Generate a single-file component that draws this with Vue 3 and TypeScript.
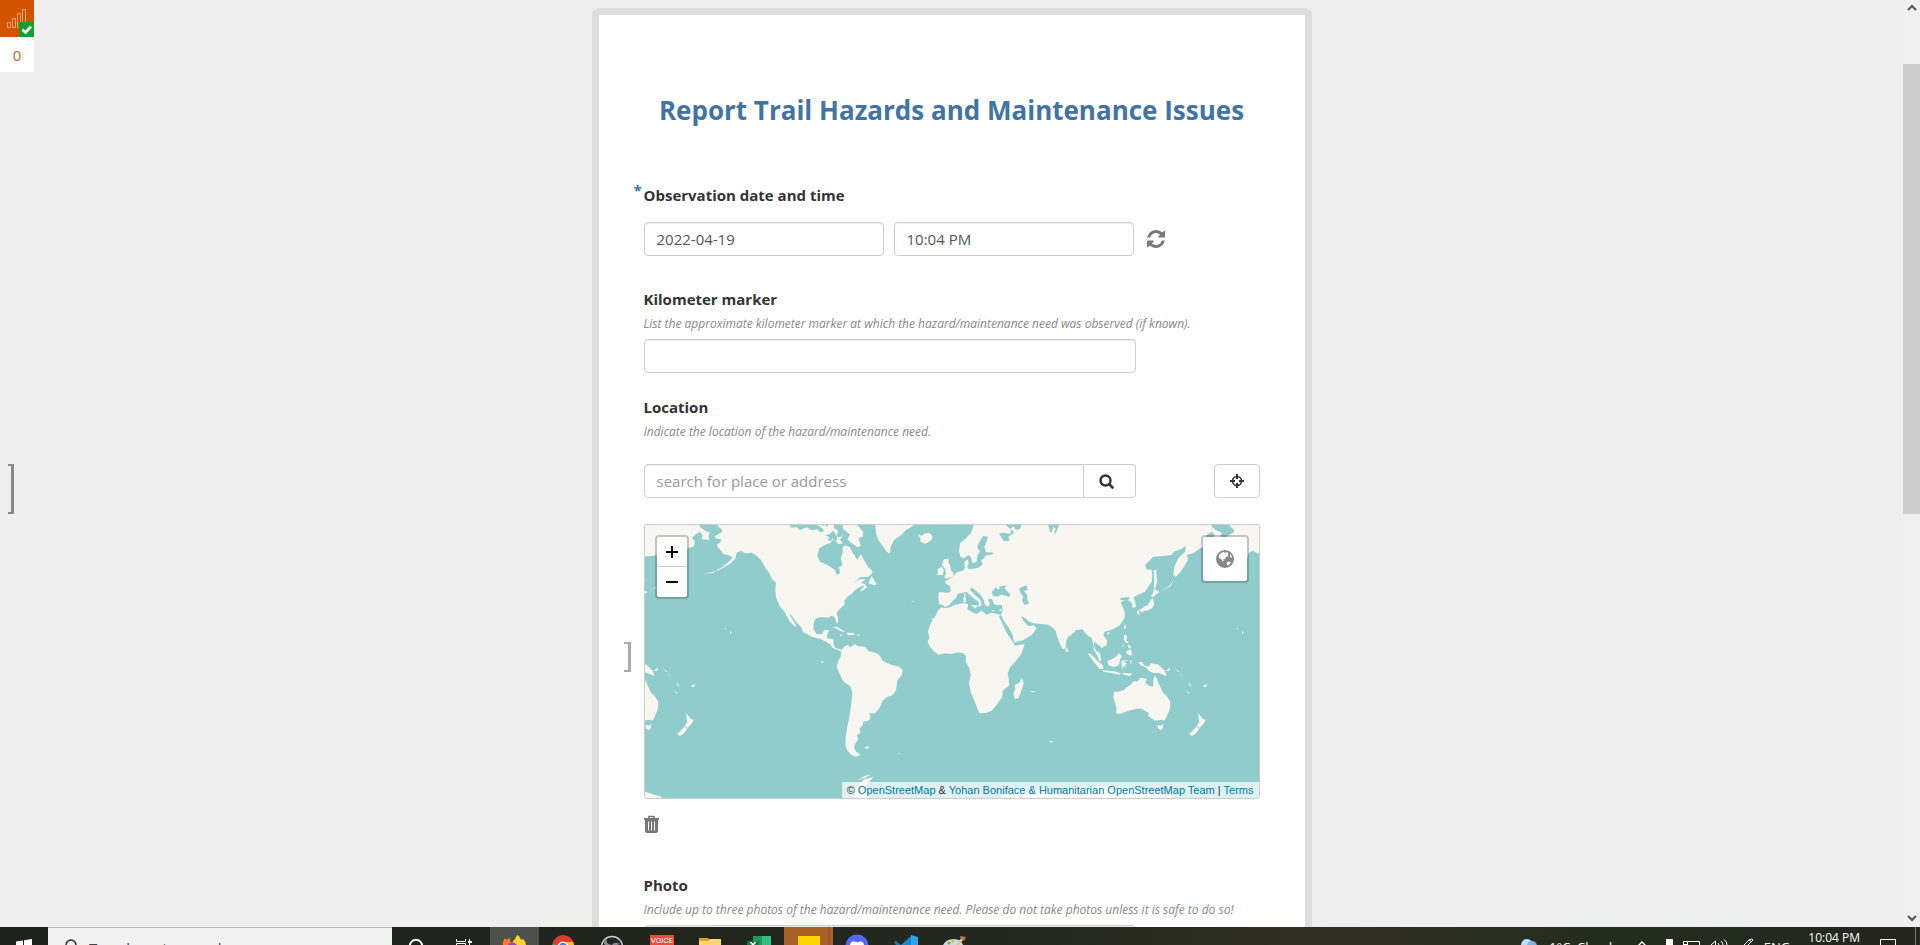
<script setup lang="ts">
import { ref } from 'vue'

const date = ref('2022-04-19')
const time = ref('10:04 PM')
const kilometer = ref('')
const place = ref('')
const copies = [-1536, 0, 1536]

const continents = [
  // North and South America
  'M288,35 L296,52 L305,58 L306,66 L296,72 L283,80 L290,86 L303,88 L302,96 L291,104 L293,112 L304,122 L310,132 L325,136 L338,142 L328,154 L308,170 L290,180 L292,183 L315,170 L332,160 L346,146 L350,128 L363,122 L375,130 L395,128 L412,138 L424,152 L435,170 L448,190 L456,206 L468,218 L466,240 L468,262 L480,290 L492,303 L500,318 L510,335 L525,350 L529,348 L520,332 L507,312 L513,314 L528,335 L545,353 L549,366 L575,380 L600,386 L618,395 L630,402 L638,414 L655,420 L664,426 L662,440 L655,452 L650,470 L658,490 L670,514 L692,530 L697,550 L693,590 L688,620 L682,650 L677,680 L676,705 L682,722 L695,735 L708,740 L722,735 L708,725 L702,712 L706,700 L714,690 L711,675 L722,668 L718,655 L728,647 L730,635 L745,632 L752,622 L748,610 L766,610 L780,592 L788,572 L800,562 L818,555 L828,540 L832,512 L845,495 L848,480 L838,470 L815,465 L800,458 L788,452 L778,434 L762,427 L745,424 L735,410 L715,409 L705,403 L690,412 L684,404 L672,410 L665,420 L655,416 L645,413 L640,400 L640,388 L622,385 L620,378 L628,360 L612,360 L606,372 L590,373 L580,357 L582,335 L588,325 L605,321 L625,323 L634,317 L643,320 L650,338 L654,339 L654,322 L650,308 L660,296 L675,282 L672,272 L685,258 L695,252 L705,240 L720,231 L735,226 L720,244 L728,242 L742,232 L734,222 L722,219 L738,208 L718,208 L700,220 L720,202 L745,200 L757,190 L757,182 L745,172 L735,155 L722,132 L712,150 L700,132 L690,112 L675,106 L668,112 L668,130 L662,145 L668,165 L657,172 L660,190 L650,195 L645,180 L622,165 L600,155 L592,138 L598,115 L614,105 L632,98 L640,88 L630,70 L640,62 L650,78 L652,92 L664,85 L670,70 L655,58 L658,35 Z',
  'M665,35 L690,35 L715,48 L730,66 L728,80 L716,84 L722,108 L712,112 L690,95 L682,88 L690,74 L670,58 Z',
  'M645,92 L660,88 L668,100 L655,102 Z',
  // Greenland and Iceland
  'M765,35 L768,70 L775,90 L788,108 L800,125 L810,131 L812,112 L822,90 L845,74 L858,60 L880,47 L885,35 Z',
  'M893,73 L905,77 L915,70 L930,70 L938,80 L932,92 L915,101 L900,94 L902,86 Z',
  'M745,220 L755,198 L762,210 L770,222 L764,226 Z',
  // Caribbean
  'M635,353 L650,350 L668,361 L678,366 L662,364 L648,355 Z',
  'M680,368 L698,368 L705,375 L684,376 Z',
  'M660,373 L668,375 L662,377 Z',
  'M711,373 L719,374 L718,377 L711,376 Z',
  'M734,711 L748,709 L746,715 L738,716 Z',
  // Europe and Asia
  'M1065,35 L1053,68 L1035,88 L1020,100 L1017,125 L1022,140 L1032,145 L1045,135 L1052,140 L1058,160 L1070,155 L1072,135 L1080,125 L1072,112 L1078,95 L1090,78 L1103,80 L1100,95 L1093,110 L1098,127 L1122,128 L1118,133 L1095,137 L1093,145 L1082,150 L1088,162 L1078,172 L1060,176 L1046,178 L1042,170 L1046,160 L1044,148 L1032,156 L1035,175 L1027,183 L1012,186 L1000,198 L988,208 L974,214 L978,222 L990,228 L992,245 L985,248 L957,246 L955,262 L957,282 L968,284 L975,292 L988,285 L998,272 L1010,262 L1012,252 L1028,248 L1040,245 L1050,255 L1065,268 L1078,278 L1073,292 L1085,286 L1082,270 L1065,255 L1050,240 L1054,232 L1066,241 L1082,255 L1090,268 L1095,285 L1105,290 L1110,280 L1103,268 L1115,266 L1122,282 L1130,286 L1146,285 L1148,300 L1143,314 L1150,330 L1165,352 L1178,375 L1182,398 L1210,390 L1235,375 L1250,355 L1240,345 L1228,349 L1220,343 L1210,332 L1203,318 L1215,325 L1228,335 L1240,340 L1285,344 L1300,355 L1307,362 L1311,378 L1318,398 L1328,418 L1336,415 L1340,386 L1355,373 L1370,360 L1388,358 L1395,368 L1405,378 L1415,384 L1419,400 L1422,420 L1431,435 L1440,455 L1444,450 L1440,430 L1428,422 L1420,405 L1424,396 L1432,402 L1445,415 L1460,405 L1462,392 L1450,375 L1454,365 L1465,362 L1480,358 L1500,345 L1513,325 L1515,310 L1508,290 L1502,277 L1516,270 L1500,271 L1502,264 L1520,262 L1530,262 L1524,272 L1534,275 L1538,294 L1548,290 L1546,275 L1540,262 L1560,252 L1575,245 L1585,230 L1595,215 L1597,195 L1595,180 L1580,178 L1575,165 L1600,140 L1630,138 L1655,135 L1662,125 L1682,118 L1698,108 L1695,125 L1675,145 L1663,170 L1660,195 L1668,200 L1682,185 L1695,165 L1705,148 L1700,135 L1720,130 L1741,115 L1758,108 L1761,92 L1751,85 L1764,72 L1776,65 L1784,75 L1781,88 L1804,90 L1801,78 L1806,68 L1791,62 L1776,50 L1768,35 Z',
  // British Isles
  'M977,207 L998,200 L1001,190 L993,180 L990,165 L985,158 L986,147 L972,148 L966,165 L976,178 L978,192 L973,198 Z',
  'M952,195 L969,194 L971,180 L966,170 L954,176 Z',
  // Mediterranean islands
  'M1030,262 L1038,262 L1037,277 L1031,278 Z', 'M1033,249 L1037,250 L1036,260 L1032,258 Z', 'M1052,286 L1072,285 L1068,296 Z', 'M1110,300 L1126,301 L1120,304 Z', 'M1136,300 L1146,297 L1142,304 Z',
  // Africa
  'M972,294 L965,292 L955,300 L948,315 L935,335 L928,350 L924,365 L928,385 L923,395 L930,410 L940,422 L955,434 L975,430 L995,432 L1015,427 L1030,430 L1038,438 L1037,455 L1048,475 L1052,495 L1047,520 L1052,545 L1062,570 L1072,595 L1078,610 L1100,608 L1115,602 L1130,585 L1140,570 L1147,562 L1148,542 L1168,525 L1166,505 L1163,490 L1170,472 L1188,452 L1205,430 L1214,402 L1185,407 L1174,390 L1160,368 L1149,345 L1137,320 L1143,314 L1130,312 L1115,308 L1100,314 L1085,302 L1068,312 L1055,305 L1042,298 L1045,282 L1030,280 L1005,284 L985,293 Z',
  'M1206,504 L1211,520 L1203,545 L1195,565 L1184,566 L1180,550 L1186,538 L1184,526 L1198,518 Z',
  // South-east Asia
  'M1337,411 L1345,420 L1342,427 L1337,425 Z',
  'M1403,429 L1415,434 L1432,452 L1448,465 L1451,478 L1438,476 L1424,459 L1410,440 Z',
  'M1448,480 L1464,482 L1482,484 L1502,490 L1500,494 L1474,489 L1450,485 Z',
  'M1462,453 L1475,448 L1488,440 L1497,430 L1506,438 L1500,450 L1496,466 L1482,471 L1465,466 Z',
  'M1504,452 L1524,450 L1512,455 L1522,462 L1514,464 L1519,474 L1511,468 L1506,478 Z',
  'M1508,488 L1522,490 L1538,491 L1528,499 L1510,493 Z', 'M1530,452 L1535,450 L1533,464 Z',
  'M1513,374 L1521,377 L1519,392 L1528,400 L1518,398 L1511,388 Z', 'M1523,403 L1533,409 L1531,416 L1524,412 Z', 'M1517,425 L1532,418 L1537,430 L1532,437 L1520,431 Z', 'M1504,413 L1513,398 L1510,408 Z',
  'M1511,354 L1517,342 L1518,352 L1513,359 Z', 'M1460,368 L1470,367 L1465,375 Z',
  'M1554,457 L1566,456 L1573,466 L1585,470 L1593,460 L1613,463 L1625,473 L1635,484 L1640,498 L1626,493 L1616,488 L1603,490 L1588,484 L1577,472 L1562,466 Z',
  'M1636,482 L1650,473 L1648,482 Z', 'M1664,475 L1678,485 L1674,486 Z', 'M1680,488 L1689,497 L1684,494 Z', 'M1706,515 L1714,528 L1710,529 Z', 'M1696,539 L1709,549 L1706,551 Z', 'M1751,526 L1762,522 L1758,530 L1752,532 Z',
  // Japan, Sakhalin and Kurils
  'M1553,300 L1565,296 L1575,289 L1583,286 L1590,273 L1597,265 L1602,272 L1602,285 L1596,295 L1580,302 L1563,302 Z', 'M1550,303 L1558,304 L1558,315 L1552,312 Z', 'M1561,302 L1572,302 L1565,308 Z', 'M1592,258 L1600,248 L1601,235 L1618,246 L1610,252 L1600,261 Z', 'M1601,180 L1609,180 L1610,202 L1612,213 L1606,235 L1601,232 L1603,212 Z', 'M1620,247 L1650,226 L1662,207 L1652,228 Z',
  // Australia and New Zealand
  'M1482,545 L1480,560 L1485,580 L1490,595 L1488,610 L1500,612 L1515,606 L1532,601 L1550,596 L1565,596 L1577,604 L1586,608 L1585,618 L1594,625 L1605,632 L1620,630 L1635,631 L1643,612 L1650,598 L1651,575 L1640,558 L1630,550 L1623,535 L1616,520 L1605,495 L1600,510 L1599,530 L1588,528 L1576,518 L1580,506 L1562,503 L1552,515 L1542,513 L1532,524 L1520,532 L1512,540 L1495,545 Z',
  'M1612,644 L1621,647 L1629,643 L1629,654 L1622,661 L1614,655 Z',
  'M1733,610 L1744,620 L1749,628 L1758,629 L1748,644 L1738,654 L1730,648 L1738,636 Z', 'M1729,650 L1738,656 L1726,672 L1715,678 L1707,672 L1718,662 Z',
  // Scattered islands
  'M1848,354 L1858,358 L1853,358 Z', 'M1865,362 L1871,368 L1868,371 Z', 'M603,452 L611,455 L606,460 Z', 'M1288,693 L1300,693 L1293,698 Z', 'M833,727 L843,733 L838,733 Z', 'M250,190 L275,187 L292,181 L278,190 Z', 'M873,273 L888,277 L877,276 Z', 'M930,326 L942,325 L938,329 Z', 'M1228,545 L1252,542 L1240,547 Z',
  // Antarctica
  'M700,880 L706,855 L705,838 L720,820 L733,808 L760,801 L745,818 L735,830 L740,850 L745,880 Z', 'M712,810 L735,797 L754,793 L735,804 Z',
  'M1130,880 L1150,855 L1175,840 L1205,838 L1230,848 L1270,834 L1290,845 L1320,855 L1340,842 L1370,828 L1400,835 L1440,827 L1510,832 L1575,842 L1612,845 L1635,853 L1660,860 L1670,880 Z',
]

const seas = [
  'M1119,257 L1115,247 L1128,231 L1134,239 L1140,235 L1136,230 L1160,226 L1153,235 L1161,243 L1172,254 L1167,260 L1145,254 L1130,260 Z',
  'M1198,235 L1220,226 L1223,239 L1212,244 L1222,255 L1221,264 L1227,281 L1212,284 L1206,270 L1210,260 L1200,247 Z',
  'M1137,70 L1153,68 L1171,72 L1173,60 L1158,45 L1190,35 L1220,35 L1205,45 L1200,57 L1187,60 L1182,50 L1171,55 L1183,68 L1165,80 L1168,92 L1152,94 L1145,84 Z',
  'M1285,45 L1300,35 L1330,35 L1316,48 L1308,68 L1302,71 L1307,56 L1299,50 L1296,65 L1290,68 Z',
  'M505,35 L600,35 L592,46 L606,54 L613,64 L601,67 L590,58 L575,61 L560,52 L540,60 L530,51 L513,53 Z',
  'M605,35 L625,35 L622,52 L616,45 L608,48 Z',
  'M638,35 L670,35 L665,53 L672,65 L662,82 L650,80 L654,62 L643,55 Z',
  'M616,76 L630,71 L640,80 L634,93 L624,91 L628,81 Z',
]
</script>

<template>
  <div class="screen">
    <div class="browser">
      <main class="page">
        <aside class="badge" aria-label="Status">
          <div class="badge-icon">
            <svg width="34" height="37" viewBox="0 0 34 37">
              <g fill="none" stroke="#f0a070" stroke-width="1">
                <path d="M7.500 22.500h3v5h-3zM12.500 18.500h3v9h-3zM17.500 13.500h3v14h-3zM22.500 9.500h3v18h-3z" />
              </g>
              <path d="M19 22h15v15H19z" fill="#12a02c" />
              <path d="m22.500 29.500 3 3 5.500-6" fill="none" stroke="#fff" stroke-width="2.600" />
            </svg>
          </div>
          <div class="badge-count">0</div>
        </aside>
        <span class="bracket bracket-page"></span>

        <form class="form" @submit.prevent>
          <h1>Report Trail Hazards and Maintenance Issues</h1>

          <section class="question datetime">
            <span class="required">*</span>
            <label class="label" for="date">Observation date and time</label>
            <div class="row">
              <input id="date" v-model="date" class="input" type="text" />
              <input v-model="time" class="input" type="text" aria-label="Observation time" />
              <button class="plain" type="button" aria-label="Reset">
                <svg width="18" height="18" viewBox="0 0 1536 1536" fill="#777">
                  <path d="M1511 928q0 5-1 7-64 268-268 434.500T764 1536q-146 0-282.500-55T238 1324l-129 129q-19 19-45 19t-45-19-19-45V960q0-26 19-45t45-19h448q26 0 45 19t19 45-19 45l-137 137q71 66 161 102t187 36q134 0 250-65t186-179q11-17 53-117 8-23 30-23h192q13 0 22.500 9.500t9.500 22.500zm25-800v448q0 26-19 45t-45 19h-448q-26 0-45-19t-19-45 19-45l138-138Q969 256 768 256q-134 0-250 65T332 500q-11 17-53 117-8 23-30 23H50q-13 0-22.500-9.500T18 608v-7q65-268 270-434.500T768 0q146 0 284 55.500T1297 212l130-129q19-19 45-19t45 19 19 45z" />
                </svg>
              </button>
            </div>
          </section>

          <section class="question kilometer">
            <label class="label" for="km">Kilometer marker</label>
            <p class="hint">List the approximate kilometer marker at which the hazard/maintenance need was observed (if known).</p>
            <input id="km" v-model="kilometer" class="input wide" type="text" />
          </section>

          <section class="question location">
            <label class="label" for="place">Location</label>
            <p class="hint">Indicate the location of the hazard/maintenance need.</p>
            <div class="search-row">
              <div class="search wide">
                <input id="place" v-model="place" class="input" type="text" placeholder="search for place or address" />
                <button class="btn search-btn" type="button" aria-label="Search">
                  <svg width="15" height="15" viewBox="0 0 15 15" fill="none" stroke="#333">
                    <circle cx="6.500" cy="6.500" r="5" stroke-width="2.400" />
                    <path d="m10.200 10.200 3.300 3.300" stroke-width="2.600" stroke-linecap="round" />
                  </svg>
                </button>
              </div>
              <button class="btn locate" type="button" aria-label="Detect location">
                <svg width="14" height="14" viewBox="0 0 14 14" fill="none" stroke="#333" stroke-width="2">
                  <circle cx="7" cy="7" r="4.500" stroke-width="1.600" />
                  <path d="M7 0v5M7 9v5M0 7h5M9 7h5" />
                </svg>
              </button>
            </div>
            <div class="map-wrap">
              <span class="bracket bracket-map"></span>
              <div class="map">
                <svg class="world" viewBox="75 45 1842 819" preserveAspectRatio="xMidYMid slice">
                  <defs>
                    <filter id="coast" x="0" y="0" width="100%" height="100%">
                      <feTurbulence type="fractalNoise" baseFrequency="0.18" numOctaves="2" seed="4" result="n" />
                      <feDisplacementMap in="SourceGraphic" in2="n" scale="4" xChannelSelector="R" yChannelSelector="G" />
                    </filter>
                  </defs>
                  <g filter="url(#coast)">
                    <path d="M0 0H2000V900H0z" fill="#90cccb" />
                    <g v-for="dx in copies" :key="dx" :transform="`translate(${dx} 0)`">
                      <path v-for="(d, i) in continents" :key="'c' + i" :d="d" fill="#f7f6f1" />
                      <path v-for="(d, i) in seas" :key="'s' + i" :d="d" fill="#90cccb" />
                    </g>
                  </g>
                </svg>
                <div class="zoom">
                  <button type="button" aria-label="Zoom in"><svg width="14" height="14" viewBox="0 0 14 14"><path d="M7 1v12M1 7h12" stroke="#000" stroke-width="2" /></svg></button>
                  <button type="button" aria-label="Zoom out"><svg width="14" height="14" viewBox="0 0 14 14"><path d="M1 7h12" stroke="#000" stroke-width="2" /></svg></button>
                </div>
                <button class="layers" type="button" aria-label="Map layers">
                  <svg width="18" height="18" viewBox="0 0 18 18">
                    <circle cx="9" cy="9" r="9" fill="#888" />
                    <path d="M3 5 5 3l3-1 1 1 2-1 1.500 1.500-1 1 1 1.500-2.500 1-1 2-2 .5 1 1.500-1 .5-2-2.500-2-1zM14 4l1.500 1.500L16 8l-2-1zM10.500 13l2-1.500 2.500.5-1.500 2.500-2 1z" fill="#fff" />
                  </svg>
                </button>
                <p class="attribution">© <a href="#">OpenStreetMap</a> &amp; <a href="#">Yohan Boniface &amp; Humanitarian OpenStreetMap Team</a> | <a href="#">Terms</a></p>
              </div>
            </div>
            <button class="plain trash" type="button" aria-label="Clear location">
              <svg width="15" height="18" viewBox="0 0 15 18">
                <path d="M5 3V1.500h5V3" fill="none" stroke="#777" stroke-width="1.600" />
                <path d="M0 3h15v2H0zM1 5h13v11q0 2-2 2H3q-2 0-2-2z" fill="#777" />
                <path d="M4.500 6.500v9M7.500 6.500v9M10.500 6.500v9" stroke="#fff" stroke-width="1" />
              </svg>
            </button>
          </section>

          <section class="question photo">
            <label class="label" for="photo">Photo</label>
            <p class="hint">Include up to three photos of the hazard/maintenance need. Please do not take photos unless it is safe to do so!</p>
            <input id="photo" class="input wide" type="text" readonly />
          </section>
        </form>
      </main>
      <div class="scrollbar">
        <svg width="17" height="17" viewBox="0 0 17 17" fill="none" stroke="#555" stroke-width="2"><path d="m5 10 4-4 4 4" /></svg>
        <div class="track"><div class="thumb"></div></div>
        <svg width="17" height="17" viewBox="0 0 17 17" fill="none" stroke="#555" stroke-width="2"><path d="m5 6 4 4 4-4" /></svg>
      </div>
    </div>

    <footer class="taskbar">
      <button class="task start" type="button" aria-label="Start">
        <svg width="48" height="18" viewBox="0 0 48 18"><path d="M16 14.500l7-1V18h-7zM24 13.300l8-1.300v6h-8z" fill="#fff" /></svg>
      </button>
      <label class="task-search">
        <svg width="12" height="16" viewBox="0 0 12 16" fill="none" stroke="#222" stroke-width="1.400"><circle cx="6" cy="7" r="5" /><path d="m3 11-3 4" /></svg>
        <input type="text" placeholder="Type here to search" aria-label="Type here to search" />
      </label>
      <button class="task" type="button" aria-label="Cortana">
        <svg width="49" height="18" viewBox="0 0 49 18"><circle cx="24" cy="19" r="6.200" fill="none" stroke="#fff" stroke-width="2" /></svg>
      </button>
      <button class="task" type="button" aria-label="Task view">
        <svg width="49" height="18" viewBox="0 0 49 18" fill="none" stroke="#fff"><path d="M15.500 12v2.500h9V12M15.500 18v-1.500h9V18M28.500 12v2M28.500 16v2" /><path d="M27 15h4" stroke-width="2" /></svg>
      </button>
      <button class="task active" type="button" aria-label="Firefox">
        <svg width="49" height="18" viewBox="0 0 49 18"><path d="M13 18q-1-3 2-7l1 2 4-2v3l4 4z" fill="#ff7b24" /><path d="M22 18q0-4 3-6l2-4q3 1 4 5l2-1q3 3 3 6z" fill="#ffd42c" /><path d="M18 18q2-4 7-2l2 2z" fill="#9a42d7" /></svg>
      </button>
      <button class="task" type="button" aria-label="Chrome">
        <svg width="49" height="18" viewBox="0 0 49 18"><circle cx="24" cy="20" r="11" fill="#2fa853" /><path d="M14 15a11 11 0 0 1 21 2H24l-6 3z" fill="#e33b2e" /><path d="M24 15h10q1 2 1 3h-9z" fill="#fbc116" /><circle cx="24" cy="20" r="5.500" fill="#fff" /><circle cx="24" cy="20" r="4.300" fill="#4285f4" /></svg>
      </button>
      <button class="task" type="button" aria-label="OBS Studio">
        <svg width="49" height="18" viewBox="0 0 49 18"><circle cx="24" cy="20" r="10.500" fill="#23232a" stroke="#ccc" stroke-width="1.500" /><path d="M19 12q-2 5 5 6 2-4 8-1l-3 1H17q-3-3 2-6z" fill="#8b8b8e" /></svg>
      </button>
      <button class="task" type="button" aria-label="Voice">
        <span class="voice">VOICE</span>
      </button>
      <button class="task" type="button" aria-label="File Explorer">
        <svg width="49" height="18" viewBox="0 0 49 18"><path d="M13 11h9l2 2v5H13z" fill="#dca11f" /><path d="M13 14h9l2-2h11v6H13z" fill="#ffd673" /></svg>
      </button>
      <button class="task" type="button" aria-label="Excel">
        <svg width="49" height="18" viewBox="0 0 49 18"><path d="M18 9h9v9h-9z" fill="#20985d" /><path d="M27 9h9v9h-9z" fill="#34bf80" /><path d="M12 14h12v4H12z" fill="#117943" /><path d="m15.500 15 2.500 3 2.500-3" fill="none" stroke="#fff" stroke-width="1.500" /></svg>
      </button>
      <button class="task notes" type="button" aria-label="Sticky Notes">
        <svg width="49" height="18" viewBox="0 0 49 18"><path d="M45 0v18" stroke="#7f4a20" /><path d="M14 9h22v9H14z" fill="#ffd500" /></svg>
      </button>
      <button class="task" type="button" aria-label="Discord">
        <svg width="49" height="18" viewBox="0 0 49 18"><circle cx="24" cy="19" r="11.500" fill="#5865f2" /><path d="M17 18q0-3 4-4l1 1h4l1-1q4 1 4 4z" fill="#fff" /></svg>
      </button>
      <button class="task" type="button" aria-label="Visual Studio Code">
        <svg width="49" height="18" viewBox="0 0 49 18"><path d="M19 18 30 8v10z" fill="#1787cc" /><path d="M29 8l7 2v8h-7z" fill="#2ea4ed" /><path d="m12 15 2-1 5 4h-5z" fill="#1478b8" /></svg>
      </button>
      <button class="task" type="button" aria-label="Paint">
        <svg width="49" height="18" viewBox="0 0 49 18"><path d="M12 18q3-6 11-6 7 0 9 6z" fill="#c9dbe5" /><path d="m25 18 5-7 3 1-5 6z" fill="#e2c28c" /><path d="m29 9 6 1-2 4-3-2z" fill="#b7794f" /><circle cx="18" cy="16" r="1.600" fill="#65b949" /><circle cx="22" cy="14" r="1.500" fill="#e8b835" /></svg>
      </button>
      <div class="tray">
        <svg width="20" height="18" viewBox="0 0 20 18"><circle cx="8" cy="18" r="6" fill="#b9def7" /><circle cx="13" cy="19" r="5" fill="#74b9e8" /></svg>
        <span class="tray-text weather">1°C&nbsp; Cloudy</span>
        <svg width="10" height="18" viewBox="0 0 10 18"><path d="m1 19 4-4 4 4" fill="none" stroke="#fff" stroke-width="1.400" /></svg>
        <svg class="usb" width="8" height="18" viewBox="0 0 8 18"><path d="M1 12h7v6H1z" fill="#fff" /></svg>
        <svg width="17" height="18" viewBox="0 0 17 18" fill="none" stroke="#fff"><path d="M.5 18v-3.500h16V18M.5 17.500h4M4.500 14.500V18" /></svg>
        <svg width="18" height="18" viewBox="0 0 18 18" fill="none" stroke="#fff"><path d="M1 18 5.500 14v4M8 16l1 2M11 14q2 2 2 4M14 12.500q3 2 3 5.500" /></svg>
        <svg class="pen" width="12" height="18" viewBox="0 0 12 18" fill="none" stroke="#fff"><path d="m2 18 5-5q3-2 4 0l-5 5M7 13l3 2" /></svg>
        <span class="tray-text">ENG</span>
        <span class="clock">10:04 PM</span>
        <svg class="notice" width="17" height="18" viewBox="0 0 17 18"><path d="M.5 18v-5.500h15V18" fill="none" stroke="#fff" /></svg>
        <span class="desktop"></span>
      </div>
    </footer>
  </div>
</template>

<style>
body {
  margin: 0;
}
</style>

<style scoped>
* {
  box-sizing: border-box;
}
.screen {
  display: flex;
  flex-direction: column;
  height: 100vh;
  overflow: hidden;
  background: #efefef;
  color: #333;
  font-family: 'Open Sans', 'Noto Sans', sans-serif;
  font-size: 15px;
}
button,
input {
  font: inherit;
  color: inherit;
  margin: 0;
}
button {
  padding: 0;
  border: 0;
  background: none;
  cursor: pointer;
}
svg {
  display: block;
  flex: none;
}
.browser {
  display: flex;
  flex: 1;
  min-height: 0;
}
.page {
  position: relative;
  flex: 1;
  overflow: hidden;
  padding: 8px 20px 0;
}
.badge {
  position: absolute;
  top: 0;
  left: 0;
  width: 34px;
}
.badge-icon {
  background: #d35400;
}
.badge-count {
  height: 35px;
  background: #fff;
  color: #c4622b;
  line-height: 37px;
  text-align: center;
}
.bracket {
  position: absolute;
  border: solid #888;
  border-width: 2px 3px 2px 0;
}
.bracket-page {
  left: 8px;
  top: 464px;
  width: 6px;
  height: 50px;
}
.bracket-map {
  left: -20px;
  top: 118px;
  width: 7px;
  height: 30px;
  border-color: #aaa;
}
.form {
  max-width: 720px;
  min-height: 1100px;
  margin: 0 auto;
  padding: 75px 45px 0;
  border: 7px solid #ddd;
  border-radius: 7px;
  background: #fff;
}
h1 {
  margin: 0;
  color: #4173a3;
  font-size: 26px;
  line-height: 40px;
  font-weight: 700;
  text-align: center;
}
.question {
  position: relative;
}
.datetime {
  margin-top: 55px;
}
.required {
  position: absolute;
  left: -10px;
  top: -5px;
  color: #4173a3;
  font-weight: 700;
  line-height: 20px;
}
.label {
  display: block;
  line-height: 20px;
  font-weight: 700;
}
.hint {
  margin: 5px 0 0;
  color: #888;
  font-size: 12px;
  line-height: 20px;
  font-style: italic;
}
.row {
  display: flex;
  align-items: center;
  gap: 10px;
  margin-top: 17px;
}
.row .plain {
  margin-left: 3px;
}
.input {
  display: block;
  width: 240px;
  height: 34px;
  padding: 0 12px;
  border: 1px solid #ccc;
  border-radius: 4px;
  background: #fff;
  box-shadow: inset 0 1px 1px rgba(0, 0, 0, 0.07);
  color: #555;
  outline: none;
}
.input::placeholder {
  color: #999;
  opacity: 1;
}
.wide {
  width: 80%;
}
.kilometer {
  margin-top: 33px;
}
.kilometer .input {
  margin-top: 5px;
}
.location {
  margin-top: 24px;
}
.search-row {
  display: flex;
  justify-content: space-between;
  margin-top: 22px;
}
.search {
  display: flex;
}
.search .input {
  flex: 1;
  border-radius: 4px 0 0 4px;
}
.btn {
  display: flex;
  align-items: center;
  justify-content: center;
  height: 34px;
  border: 1px solid #ccc;
  border-radius: 4px;
  background: #fff;
}
.search-btn {
  width: 52px;
  padding-right: 6px;
  border-left: 0;
  border-radius: 0 4px 4px 0;
}
.locate {
  width: 46px;
}
.map-wrap {
  position: relative;
  margin-top: 26px;
}
.map {
  position: relative;
  height: 275px;
  overflow: hidden;
  border: 1px solid #ccc;
  border-radius: 3px;
}
.world {
  width: 100%;
  height: 100%;
}
.zoom,
.layers {
  position: absolute;
  top: 10px;
  border: 2px solid rgba(0, 0, 0, 0.2);
  border-radius: 4px;
  background: #fff;
  background-clip: padding-box;
}
.zoom {
  left: 10px;
}
.zoom button {
  display: flex;
  align-items: center;
  justify-content: center;
  width: 30px;
  height: 30px;
}
.zoom button:first-child {
  border-bottom: 1px solid #ccc;
}
.layers {
  display: flex;
  align-items: center;
  justify-content: center;
  right: 10px;
  width: 48px;
  height: 48px;
}
.attribution {
  position: absolute;
  right: 0;
  bottom: 0;
  margin: 0;
  padding: 0 5px;
  background: rgba(255, 255, 255, 0.7);
  font: 11px/16px 'Liberation Sans', Arial, sans-serif;
  white-space: nowrap;
}
.attribution a {
  color: #0078a8;
  text-decoration: none;
}
.trash {
  display: block;
  margin-top: 16px;
}
.photo {
  margin-top: 42px;
}
.photo .input {
  margin-top: 5px;
}
.scrollbar {
  display: flex;
  flex-direction: column;
  width: 17px;
  background: #f0f0f0;
}
.track {
  flex: 1;
  padding-top: 47px;
}
.thumb {
  height: 450px;
  background: #cdcdcd;
}
.taskbar {
  display: flex;
  height: 18px;
  overflow: hidden;
  background: linear-gradient(90deg, #1e211d, #25281f 55%, #302f22 70%, #222c1d 85%, #25261f);
  color: #fff;
}
.task {
  display: flex;
  align-items: flex-start;
  justify-content: center;
  flex: none;
  height: 18px;
}
.active {
  background: #4d504b;
}
.notes {
  background: #a86128;
}
.task-search {
  display: flex;
  gap: 12px;
  width: 344px;
  height: 40px;
  padding: 10px 17px 0;
  border-top: 1px solid #bbb;
  background: #f2f2f2;
  color: #333;
}
.task-search input {
  flex: 1;
  min-width: 0;
  height: 20px;
  padding: 0;
  border: 0;
  background: none;
  outline: none;
}
.task-search input::placeholder {
  color: #444;
  opacity: 1;
}
.voice {
  width: 24px;
  height: 12px;
  margin: 8px 12px 0 13px;
  background: #f04a37;
  color: #fff;
  font: 400 8px/12px Roboto, sans-serif;
  text-align: center;
}
.tray {
  display: flex;
  gap: 10px;
  margin-left: auto;
}
.tray-text {
  font-size: 13px;
  line-height: 18px;
  padding-top: 11px;
  white-space: nowrap;
}
.weather {
  margin-right: 8px;
}
.usb {
  margin-left: 8px;
}
.pen {
  margin-left: 4px;
}
.clock {
  margin-left: 8px;
  font-size: 12px;
  line-height: 22px;
  white-space: nowrap;
}
.notice {
  margin-left: 10px;
}
.desktop {
  width: 5px;
  margin-left: 8px;
  border-left: 1px solid #777;
}
</style>
